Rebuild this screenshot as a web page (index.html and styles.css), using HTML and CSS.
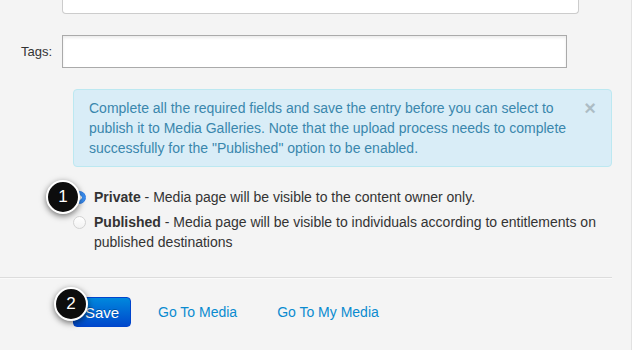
FILE: index.html
```html
<!DOCTYPE html>
<html lang="en">
<head>
    <meta charset="UTF-8">
    <title>Edit Entry</title>
    <link rel="stylesheet" href="styles.css">
</head>
<body>
    <div class="page">
        <div class="row">
            <div class="label"></div>
            <div class="field field-top"></div>
        </div>
        <div class="row row-tags">
            <label class="label" for="tags">Tags:</label>
            <input class="field field-tags" id="tags" type="text">
        </div>
        <div class="controls">
            <div class="alert">
                Complete all the required fields and save the entry before you can select to publish it to Media Galleries. Note that the upload process needs to complete successfully for the "Published" option to be enabled.
                <span class="close">&times;</span>
            </div>
            <div class="options">
                <label class="option">
                    <span class="radio checked"></span>
                    <span class="option-text"><b>Private</b> - Media page will be visible to the content owner only.</span>
                    <span class="badge badge-1">1</span>
                </label>
                <label class="option">
                    <span class="radio"></span>
                    <span class="option-text"><b>Published</b> - Media page will be visible to individuals according to entitlements on published destinations</span>
                </label>
            </div>
        </div>
        <div class="divider"></div>
        <div class="actions">
            <div class="btn-wrap">
                <button class="btn-save">Save</button>
                <span class="badge badge-2">2</span>
            </div>
            <a class="link link-media" href="#">Go To Media</a>
            <a class="link link-my" href="#">Go To My Media</a>
        </div>
    </div>
</body>
</html>
```

FILE: styles.css
```css
body { margin: 0; background: #f4f4f4; font-family: "Liberation Sans", Arial, sans-serif; color: #333; }
.page {
    width: 632px;
    height: 350px;
    box-sizing: border-box;
    border-right: 1px solid #e2e2e2;
    background: #f4f4f4;
}
.row {
    display: flex;
    align-items: center;
}
.row-tags {
    margin-top: 21px;
}
.label {
    width: 62px;
    flex: none;
    box-sizing: border-box;
    padding-left: 21px;
    font-size: 13px;
    color: #333;
}
.field {
    box-sizing: border-box;
    background: #fff;
}
.field-top {
    width: 517px;
    height: 14px;
    border: 1px solid #ccc;
    border-top: none;
    border-radius: 0 0 4px 4px;
}
.field-tags {
    width: 505px;
    height: 33px;
    margin: 0;
    border: 1px solid #aaa;
    border-radius: 0;
    box-shadow: inset 0 2px 3px rgba(0,0,0,0.08);
    outline: none;
}
.controls {
    margin-left: 73px;
    width: 539px;
}
.alert {
    position: relative;
    margin-top: 21px;
    padding: 8px 35px 8px 15px;
    background: #d9edf7;
    border: 1px solid #bce8f1;
    border-radius: 4px;
    color: #3a87ad;
    font-size: 14px;
    line-height: 20px;
}
.close {
    position: absolute;
    top: 8px;
    right: 15px;
    font-size: 20px;
    font-weight: bold;
    line-height: 20px;
    color: #000;
    opacity: 0.2;
}
.options {
    margin-top: 20px;
    display: flex;
    flex-direction: column;
    gap: 5px;
}
.option {
    position: relative;
    display: flex;
    align-items: flex-start;
    gap: 8px;
    font-size: 14px;
    line-height: 20px;
    color: #333;
}
.option b { color: #333; }
.radio {
    flex: none;
    width: 13px;
    height: 13px;
    margin-top: 4px;
    box-sizing: border-box;
    border-radius: 50%;
    border: 1px solid #d2d2d2;
    background: linear-gradient(#fff, #f2f2f2);
}
.radio.checked {
    border-color: #2f7ee6;
    background: radial-gradient(circle, #fff 0 2px, #3a90f5 2.5px);
}
.badge {
    position: absolute;
    width: 34px;
    height: 34px;
    box-sizing: border-box;
    border: 2px solid #fff;
    border-radius: 50%;
    background: #0d0d0d;
    color: #fff;
    font-size: 17px;
    line-height: 30px;
    text-align: center;
    box-shadow: 0 2px 6px rgba(0,0,0,0.55);
}
.badge-1 { left: -27px; top: -7px; }
.divider {
    width: 612px;
    margin-top: 25px;
    border-top: 1px solid #dcdcdc;
    border-bottom: 1px solid #fafafa;
}
.actions {
    display: flex;
    align-items: center;
    margin-top: 18px;
    padding-left: 73px;
}
.btn-wrap {
    position: relative;
}
.btn-save {
    display: block;
    width: 58px;
    height: 30px;
    padding: 0;
    border: 1px solid #0044cc;
    border-radius: 4px;
    background: linear-gradient(#0088dd, #0048cc);
    color: #fff;
    font-family: "Liberation Sans", Arial, sans-serif;
    font-size: 15px;
    text-shadow: 0 -1px 0 rgba(0,0,0,0.25);
}
.badge-2 { left: -19px; top: -10px; }
.link {
    color: #0a8bd0;
    font-size: 14px;
    text-decoration: none;
}
.link-media { margin-left: 27px; }
.link-my { margin-left: 40px; }
```
